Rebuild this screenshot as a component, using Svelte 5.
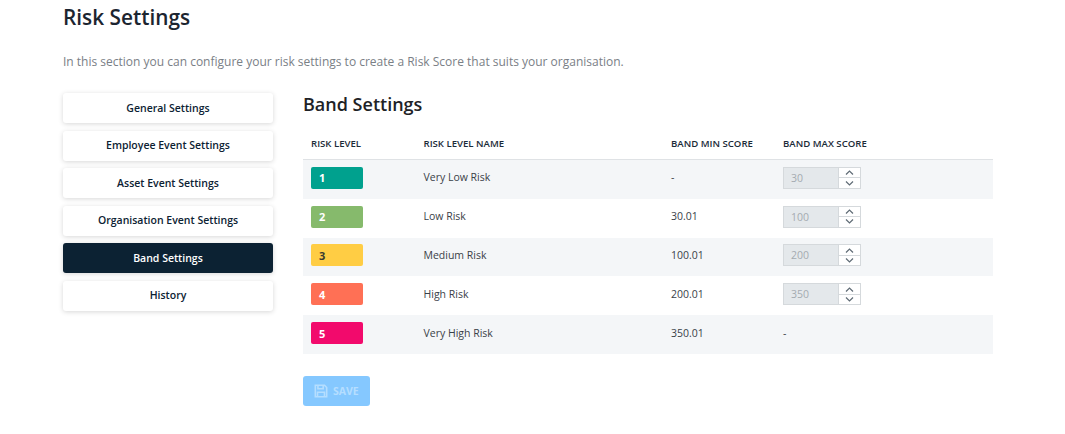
<script>
  const menu = [
    { label: 'General Settings' },
    { label: 'Employee Event Settings' },
    { label: 'Asset Event Settings' },
    { label: 'Organisation Event Settings' },
    { label: 'Band Settings', active: true },
    { label: 'History' }
  ];
  const rows = [
    { level: 1, color: '#00a18e', fg: '#fff', name: 'Very Low Risk', min: '-', max: '30' },
    { level: 2, color: '#86ba6c', fg: '#fff', name: 'Low Risk', min: '30.01', max: '100' },
    { level: 3, color: '#ffcd44', fg: '#3b3a30', name: 'Medium Risk', min: '100.01', max: '200' },
    { level: 4, color: '#ff7055', fg: '#fff', name: 'High Risk', min: '200.01', max: '350' },
    { level: 5, color: '#f20a6c', fg: '#fff', name: 'Very High Risk', min: '350.01', max: null }
  ];
</script>

<div class="page">
  <h1>Risk Settings</h1>
  <p class="intro">In this section you can configure your risk settings to create a Risk Score that suits your organisation.</p>
  <div class="layout">
    <nav class="menu">
      {#each menu as item}
        <button class="item" class:active={item.active}>{item.label}</button>
      {/each}
    </nav>
    <main class="content">
      <h2>Band Settings</h2>
      <div class="head row">
        <div>RISK LEVEL</div>
        <div>RISK LEVEL NAME</div>
        <div>BAND MIN SCORE</div>
        <div>BAND MAX SCORE</div>
      </div>
      {#each rows as r}
        <div class="row body">
          <div><span class="badge" style:background={r.color} style:color={r.fg}>{r.level}</span></div>
          <div class="cell">{r.name}</div>
          <div class="cell">{r.min}</div>
          <div>
            {#if r.max}
              <div class="spin">
                <span class="val">{r.max}</span>
                <span class="arrows">
                  <span class="arrow"><svg width="9" height="5" viewBox="0 0 9 5"><path d="M1 4.5 4.5 1 8 4.5" fill="none" stroke="#5f6b75" stroke-width="1.2"/></svg></span>
                  <span class="arrow second"><svg width="9" height="5" viewBox="0 0 9 5"><path d="M1 .5 4.5 4 8 .5" fill="none" stroke="#5f6b75" stroke-width="1.2"/></svg></span>
                </span>
              </div>
            {:else}<span class="cell">-</span>{/if}
          </div>
        </div>
      {/each}
      <button class="save">
        <svg width="14" height="14" viewBox="0 0 16 16" fill="none" stroke="#b5deff" stroke-width="1.8"><path d="M1.5 1.5h10.5l2.5 2.5v10.5h-13z"/><path d="M4.5 1.5v4h6v-4M4 14.5v-5h8v5"/></svg>
        SAVE
      </button>
    </main>
  </div>
</div>

<style>
  :global(body) {
    margin: 0;
    background: #fff;
    font-family: "Open Sans", "Noto Sans", sans-serif;
  }
  .page {
    padding: 0 72px 0 63px;
    height: 434px;
    box-sizing: border-box;
    overflow: hidden;
  }
  h1 {
    margin: 0;
    padding-top: 2px;
    font-size: 20.8px;
    line-height: 30px;
    font-weight: 600;
    color: #1c2530;
  }
  .intro {
    margin: 0;
    padding-top: 20px;
    font-size: 12px;
    line-height: 20px;
    color: #7a8086;
  }
  .layout {
    display: flex;
    gap: 30px;
    margin-top: 20px;
  }
  .menu {
    width: 210px;
    flex: none;
    display: flex;
    flex-direction: column;
    gap: 7.5px;
    padding-top: 1px;
  }
  .item {
    height: 30px;
    border: 0;
    border-radius: 3px;
    background: #fff;
    box-shadow: 0 1px 5px rgba(0, 0, 0, 0.16);
    font: 600 10.5px "Open Sans", sans-serif;
    color: #0c2233;
    padding: 0 0 1px;
  }
  .item.active {
    background: #0c2233;
    color: #fff;
  }
  .content {
    flex: 1;
    min-width: 0;
  }
  h2 {
    margin: 0;
    font-size: 18px;
    line-height: 24px;
    font-weight: 600;
    color: #1e2226;
  }
  .row {
    display: grid;
    grid-template-columns: 112.5px 247.5px 112px 1fr;
    align-items: center;
    padding-left: 8px;
    font-size: 10.5px;
    color: #3a4148;
  }
  .head {
    margin-top: 12px;
    height: 30px;
    padding-bottom: 1px;
    font-size: 9.6px;
    font-weight: 600;
    color: #1c2b38;
    border-bottom: 1px solid #dfe2e5;
    box-sizing: content-box;
  }
  .body {
    height: 38.8px;
    box-sizing: border-box;
    padding-bottom: 3px;
  }
  .body:nth-child(even) {
    background: #fff;
  }
  .body:nth-child(odd) {
    background: #f4f6f8;
  }
  .cell {
    padding-bottom: 1px;
  }
  .badge {
    display: flex;
    align-items: center;
    width: 52px;
    height: 22px;
    box-sizing: border-box;
    padding-left: 8px;
    border-radius: 2px;
    font-weight: 700;
    font-size: 11px;
  }
  .spin {
    display: flex;
    width: 78px;
    height: 22px;
    box-sizing: border-box;
    border: 1px solid #d5d9dc;
    background: #fff;
  }
  .val {
    width: 55px;
    background: #e4e8eb;
    color: #a4abb1;
    padding-left: 7px;
    box-sizing: border-box;
    line-height: 20px;
    font-size: 10.5px;
    border-right: 1px solid #d5d9dc;
  }
  .arrows {
    flex: 1;
    display: flex;
    flex-direction: column;
  }
  .arrow {
    flex: 1;
    display: flex;
    align-items: center;
    justify-content: center;
  }
  .arrow.second {
    border-top: 1px solid #d5d9dc;
  }
  .save {
    margin-top: 22px;
    width: 67px;
    height: 30px;
    display: flex;
    align-items: center;
    gap: 5px;
    padding: 0 0 0 11px;
    border: 0;
    border-radius: 3px;
    background: #85c8ff;
    color: #b5deff;
    font: 700 10.5px "Open Sans", sans-serif;
  }
</style>
